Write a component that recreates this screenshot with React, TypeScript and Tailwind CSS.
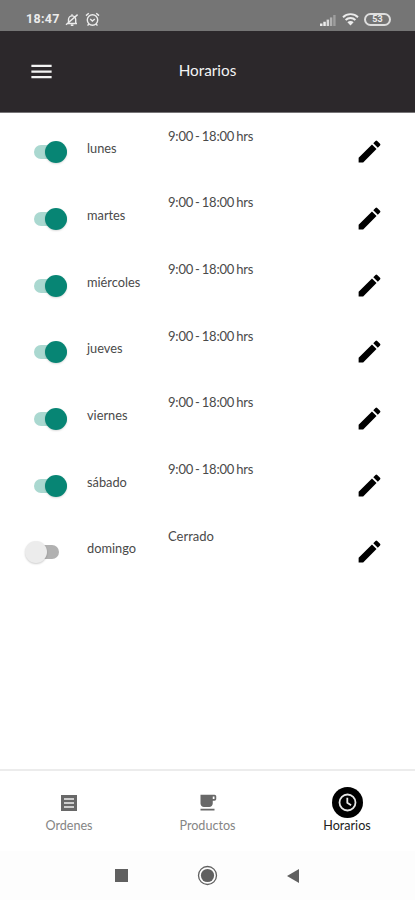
import { MdCreate, MdLocalCafe, MdMenu } from "react-icons/md";

const schedule = [
  { day: "lunes", hours: "9:00 - 18:00 hrs", open: true },
  { day: "martes", hours: "9:00 - 18:00 hrs", open: true },
  { day: "miércoles", hours: "9:00 - 18:00 hrs", open: true },
  { day: "jueves", hours: "9:00 - 18:00 hrs", open: true },
  { day: "viernes", hours: "9:00 - 18:00 hrs", open: true },
  { day: "sábado", hours: "9:00 - 18:00 hrs", open: true },
  { day: "domingo", hours: "Cerrado", open: false },
];

const StatusBar = () => {
  return (
    <div className="flex h-[31px] items-center bg-[#757575] pt-[8px] pr-[24px] pl-[26px] text-[#ececec]">
      <span className="w-[39px] font-['Roboto',sans-serif] text-[12.5px] leading-none font-bold tracking-[0.3px]">
        18:47
      </span>
      <svg className="h-[14px] w-[14px]" viewBox="0 0 14 14" fill="none" stroke="currentColor" strokeWidth="1.4">
        <path d="M2.5 10.5h9.5M3.5 10.5V6.5a3.6 3.6 0 0 1 7.2 0v4M7 1.2v1.6M5.8 12.3h2.6M1 11.8 12.6 1.6" />
      </svg>
      <svg className="ml-[6px] h-[15px] w-[15px]" viewBox="0 0 15 15" fill="none" stroke="currentColor" strokeWidth="1.4">
        <circle cx="7.5" cy="8" r="5.2" />
        <path d="M1 3.6 3.8 1.2M14 3.6 11.2 1.2M5.2 7l2.2 2 2.4-2M3.8 12 2.6 13.6M11.2 12l1.2 1.6" />
      </svg>
      <div className="ml-auto flex items-center">
        <svg className="h-[12px] w-[16px]" viewBox="0 0 16 12" fill="currentColor">
          <path d="M0 9.5h2.5V12H0zM3.3 7.8h2.5V12H3.3z" />
          <path d="M6.6 5.6h2.5V12H6.6z" opacity=".85" />
          <path d="M9.9 3.4h2.4V12H9.9z" opacity=".5" />
          <path d="M13.2 1h2.4v11h-2.4z" opacity=".35" />
        </svg>
        <svg className="ml-[6px] h-[13px] w-[17px]" viewBox="0 0 17 13" fill="none" stroke="currentColor" strokeWidth="1.9">
          <path d="M1 4.2a10.8 10.8 0 0 1 15 0M3.6 7a7 7 0 0 1 9.8 0" />
          <path d="M8.5 12.6 5.4 9.3a4.4 4.4 0 0 1 6.2 0z" fill="currentColor" stroke="none" />
        </svg>
        <span className="ml-[5px] flex h-[13px] w-[27px] items-center justify-center rounded-full border-2 border-[#dedede] font-['Roboto',sans-serif] text-[9px] leading-none font-bold">
          53
        </span>
      </div>
    </div>
  );
};

const Header = () => {
  return (
    <header className="grid h-[82px] grid-cols-3 items-center border-b border-[#777577] bg-[#2c282b] text-[#f3f3f3]">
      <button aria-label="Menu" className="ml-[28px] w-fit">
        <MdMenu className="h-[27px] w-[27px]" />
      </button>
      <h1 className="pb-[3px] text-center text-[15.3px] leading-5">Horarios</h1>
    </header>
  );
};

const Switch = ({ on }: { on: boolean }) => {
  return on ? (
    <span className="ml-[34px] flex h-[14px] w-[33px] items-center justify-end rounded-full bg-[#aad8d0]">
      <span className="h-[22px] w-[22px] rounded-full bg-[#078574] shadow-[0_1px_2px_rgba(0,0,0,0.15)]" />
    </span>
  ) : (
    <span className="ml-[26px] flex h-[14px] w-[33px] items-center rounded-full bg-[#b1b1b1]">
      <span className="-ml-px h-[22px] w-[22px] shrink-0 rounded-full bg-[#ececec] shadow-[0_1px_2px_rgba(0,0,0,0.2)]" />
    </span>
  );
};

const Schedule = () => {
  return (
    <main className="flex-1 pt-[6px]">
      {schedule.map(({ day, hours, open }) => (
        <div key={day} className="grid h-[66.65px] grid-cols-[87px_81px_1fr_60px] text-[12.8px] leading-4 text-[#4a4a4a]">
          <div className="flex items-center">
            <Switch on={open} />
          </div>
          <span className="pt-[21.3px]">{day}</span>
          {open ? (
            <span className="pt-[8.7px] text-[13px] tracking-[-0.2px] [word-spacing:-1.1px]">{hours}</span>
          ) : (
            <span className="pt-[8.7px] text-[13px]">{hours}</span>
          )}
          <button aria-label={"Editar " + day} className="flex items-center pb-px text-black">
            <MdCreate className="h-[29px] w-[29px]" />
          </button>
        </div>
      ))}
    </main>
  );
};

const TabBar = () => {
  return (
    <nav className="grid h-[82px] grid-cols-[138px_139px_138px] border-t-2 border-[#ececec] text-[12.6px] leading-4 text-[#858585]">
      <a className="flex flex-col items-center">
        <span className="mt-[16px] flex h-[31px] items-center">
          <svg className="h-[16px] w-[16px] text-[#686868]" viewBox="0 0 16 16">
            <path d="M0 0h16v16H0z" fill="currentColor" />
            <path d="M3 4h10M3 8h10M3 12h10" stroke="#f0f0f0" strokeWidth="1.7" />
          </svg>
        </span>
        Ordenes
      </a>
      <a className="flex flex-col items-center">
        <span className="mt-[16px] flex h-[31px] items-center">
          <MdLocalCafe className="h-[21px] w-[21px] text-[#686868]" />
        </span>
        Productos
      </a>
      <a className="flex flex-col items-center pl-[2px] text-[#222]">
        <span className="mt-[16px] flex h-[31px] w-[31px] items-center justify-center rounded-full bg-black">
          <svg className="h-[19px] w-[19px]" viewBox="0 0 19 19" fill="none" stroke="#e8e8e8" strokeWidth="1.8">
            <circle cx="9.5" cy="9.5" r="8" />
            <path d="M9.3 4.8v5l3.8 2.4" />
          </svg>
        </span>
        Horarios
      </a>
    </nav>
  );
};

const SystemNav = () => {
  return (
    <div className="flex h-[49px] items-center bg-[#fdfdfd] pl-[115px] text-[#606060]">
      <span className="h-[13px] w-[13px] bg-[#606060]" />
      <svg className="ml-[69px] h-[21px] w-[21px]" viewBox="0 0 21 21">
        <circle cx="10.5" cy="10.5" r="9" fill="none" stroke="currentColor" strokeWidth="1.3" />
        <circle cx="10.5" cy="10.5" r="6.6" fill="currentColor" />
      </svg>
      <svg className="ml-[69px] h-[14px] w-[12px]" viewBox="0 0 12 14" fill="currentColor">
        <path d="M12 0v14L0 7z" />
      </svg>
    </div>
  );
};

const App = () => {
  return (
    <div className="flex h-[900px] w-[415px] flex-col bg-white font-['Lato',sans-serif]">
      <StatusBar />
      <Header />
      <Schedule />
      <TabBar />
      <SystemNav />
    </div>
  );
};

export default App;
